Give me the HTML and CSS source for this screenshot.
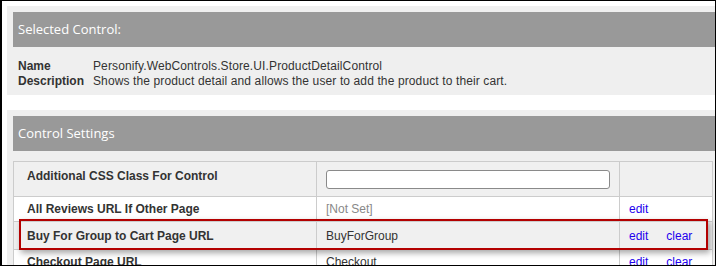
FILE: index.html
```html
<!DOCTYPE html>
<html lang="en">
<head>
  <meta charset="UTF-8">
  <title>Control Properties</title>
  <link rel="stylesheet" href="styles.css">
</head>
<body>
  <div class="frame">
    <div class="panel">
      <div class="panel-head">Selected Control:</div>
      <div class="info">
        <div class="info-row"><span class="info-label">Name</span><span>Personify.WebControls.Store.UI.ProductDetailControl</span></div>
        <div class="info-row"><span class="info-label">Description</span><span>Shows the product detail and allows the user to add the product to their cart.</span></div>
      </div>
    </div>

    <div class="panel panel-settings">
      <div class="panel-head">Control Settings</div>
      <div class="settings">
        <table class="grid">
          <colgroup>
            <col class="col-name">
            <col class="col-value">
            <col class="col-actions">
          </colgroup>
          <tr class="alt row-tall">
            <td class="name">Additional CSS Class For Control</td>
            <td class="value"><input class="text-input" type="text"></td>
            <td class="actions"></td>
          </tr>
          <tr>
            <td class="name">All Reviews URL If Other Page</td>
            <td class="value notset">[Not Set]</td>
            <td class="actions"><a href="#">edit</a></td>
          </tr>
          <tr class="alt row-mark">
            <td class="name">Buy For Group to Cart Page URL</td>
            <td class="value">BuyForGroup</td>
            <td class="actions"><a href="#">edit</a><a href="#">clear</a></td>
          </tr>
          <tr>
            <td class="name">Checkout Page URL</td>
            <td class="value">Checkout</td>
            <td class="actions"><a href="#">edit</a><a href="#">clear</a></td>
          </tr>
        </table>
        <!-- annotation box drawn over the highlighted row -->
        <div class="highlight"></div>
      </div>
    </div>
  </div>
</body>
</html>
```

FILE: styles.css
```css
body { margin: 0; background: #fff; font-family: Arial, "Liberation Sans", sans-serif; font-size: 12px; color: #333; }

.frame {
  width: 716px; height: 266px; box-sizing: border-box;
  border: 1px solid #000; border-left-width: 2px;
  padding: 5px 0 0 5px; overflow: hidden; background: #fff;
}

.panel { background: #efefef; padding: 6px 0 6px 6px; margin-right: -40px; }
.panel-settings { margin-top: 15px; }

.panel-head {
  background: #999; color: #fff; height: 35px; line-height: 35px;
  padding-left: 5px; font-family: "Open Sans", "Noto Sans", sans-serif; font-size: 13px;
}

.info { padding: 12px 5px 0; line-height: 15px; letter-spacing: 0.12px; }
.info-row { display: flex; }
.info-label { width: 75px; font-weight: bold; letter-spacing: 0; }

.settings { position: relative; margin-top: 10px; }

.grid { width: 699px; table-layout: fixed; border-collapse: collapse; background: #fff; }
.col-name { width: 303px; }
.col-value { width: 303px; }
.col-actions { width: 93px; }
.grid td { border: 1px solid #ccc; padding: 0 9px; height: 24px; vertical-align: middle; white-space: nowrap; overflow: hidden; }
.grid tr.alt td { background: #f0f0f0; }
.grid tr.row-tall td { height: 35px; vertical-align: top; padding-top: 7px; padding-bottom: 0; box-sizing: border-box; }
.grid tr.row-mark td { height: 27px; }
.grid .name { font-weight: bold; padding-left: 13px; }
.grid .notset { color: #888; }
.grid .actions a { color: #2200ee; text-decoration: none; margin-right: 18px; }

.text-input {
  display: block; width: 284px; height: 19px; box-sizing: border-box; margin: 1px 0 0;
  border: 1px solid #8a8a8a; border-radius: 3px; background: #fff; padding: 0 4px;
}

.highlight {
  position: absolute; left: 0; top: 58px; width: 689px; height: 31px;
  margin-left: 6px; box-sizing: border-box;
  border: 2px solid #b30000;
  box-shadow: 2px 3px 6px rgba(0, 0, 0, 0.35);
}
```
